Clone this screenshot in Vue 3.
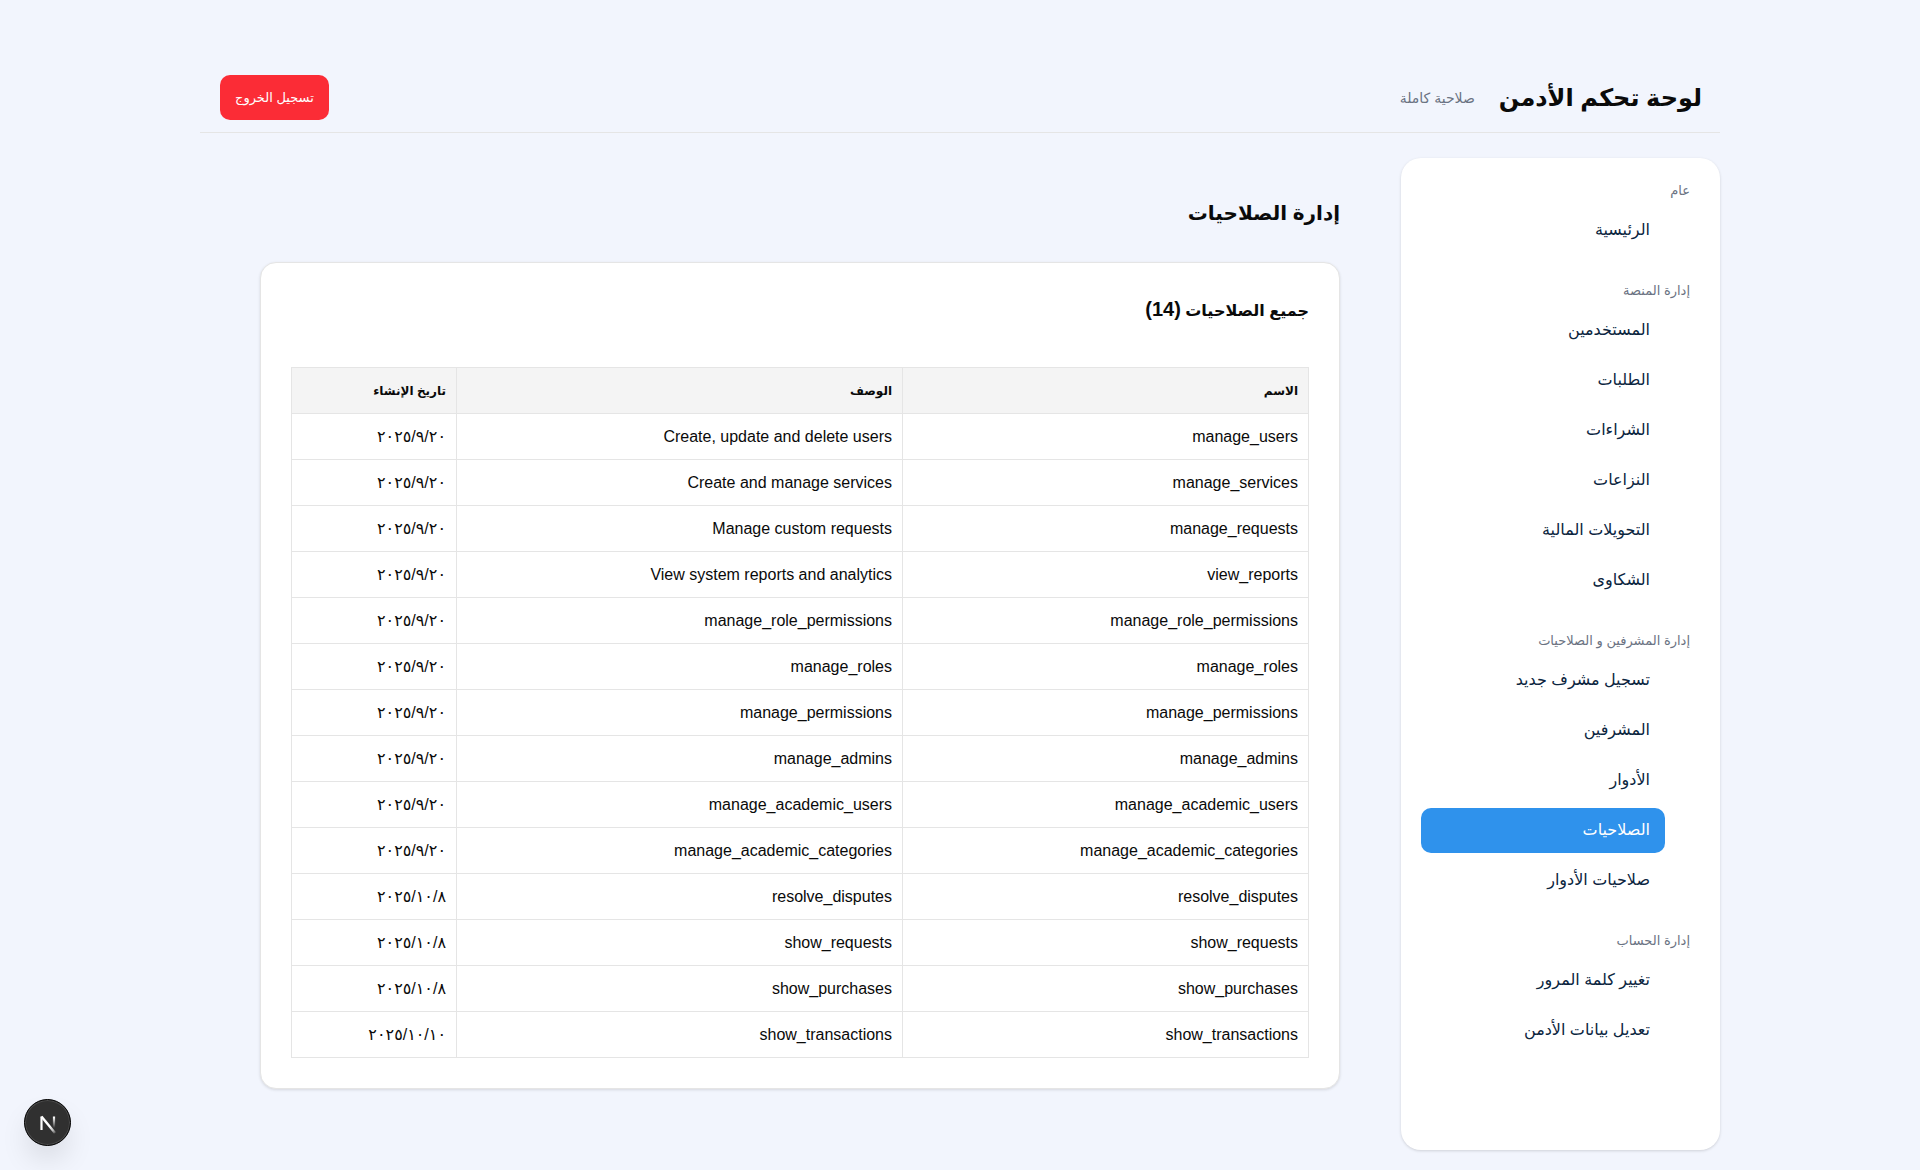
<script setup>
const sections = [
  { title: 'عام', items: ['الرئيسية'] },
  {
    title: 'إدارة المنصة',
    items: ['المستخدمين', 'الطلبات', 'الشراءات', 'النزاعات', 'التحويلات المالية', 'الشكاوى'],
  },
  {
    title: 'إدارة المشرفين و الصلاحيات',
    items: ['تسجيل مشرف جديد', 'المشرفين', 'الأدوار', 'الصلاحيات', 'صلاحيات الأدوار'],
  },
  { title: 'إدارة الحساب', items: ['تغيير كلمة المرور', 'تعديل بيانات الأدمن'] },
]
const active = 'الصلاحيات'

const permissions = [
  ['manage_users', 'Create, update and delete users', '٢٠٢٥/٩/٢٠'],
  ['manage_services', 'Create and manage services', '٢٠٢٥/٩/٢٠'],
  ['manage_requests', 'Manage custom requests', '٢٠٢٥/٩/٢٠'],
  ['view_reports', 'View system reports and analytics', '٢٠٢٥/٩/٢٠'],
  ['manage_role_permissions', 'manage_role_permissions', '٢٠٢٥/٩/٢٠'],
  ['manage_roles', 'manage_roles', '٢٠٢٥/٩/٢٠'],
  ['manage_permissions', 'manage_permissions', '٢٠٢٥/٩/٢٠'],
  ['manage_admins', 'manage_admins', '٢٠٢٥/٩/٢٠'],
  ['manage_academic_users', 'manage_academic_users', '٢٠٢٥/٩/٢٠'],
  ['manage_academic_categories', 'manage_academic_categories', '٢٠٢٥/٩/٢٠'],
  ['resolve_disputes', 'resolve_disputes', '٢٠٢٥/١٠/٨'],
  ['show_requests', 'show_requests', '٢٠٢٥/١٠/٨'],
  ['show_purchases', 'show_purchases', '٢٠٢٥/١٠/٨'],
  ['show_transactions', 'show_transactions', '٢٠٢٥/١٠/١٠'],
]
</script>

<template>
  <div class="page" dir="rtl" lang="ar">
    <header class="topbar">
      <div class="brand">
        <h1>لوحة تحكم الأدمن</h1>
        <span class="role">صلاحية كاملة</span>
      </div>
      <button type="button" class="logout">تسجيل الخروج</button>
    </header>

    <div class="layout">
      <nav class="sidebar">
        <section v-for="s in sections" :key="s.title" class="group">
          <h2 class="group-title">{{ s.title }}</h2>
          <ul>
            <li v-for="item in s.items" :key="item">
              <a href="#" :class="{ active: item === active }">{{ item }}</a>
            </li>
          </ul>
        </section>
      </nav>

      <main class="content">
        <h2 class="page-title">إدارة الصلاحيات</h2>
        <div class="card">
          <h3>جميع الصلاحيات <span class="count">(14)</span></h3>
          <table>
            <colgroup>
              <col class="col-name" />
              <col class="col-desc" />
              <col class="col-date" />
            </colgroup>
            <thead>
              <tr>
                <th>الاسم</th>
                <th>الوصف</th>
                <th>تاريخ الإنشاء</th>
              </tr>
            </thead>
            <tbody>
              <tr v-for="p in permissions" :key="p[0]">
                <td>{{ p[0] }}</td>
                <td>{{ p[1] }}</td>
                <td>{{ p[2] }}</td>
              </tr>
            </tbody>
          </table>
        </div>
      </main>
    </div>

    <button type="button" class="dev-badge" aria-label="Next.js">
      <svg width="40" height="40" viewBox="0 0 40 40" fill="none">
        <defs>
          <linearGradient id="diag" x1="22" y1="23" x2="28" y2="31" gradientUnits="userSpaceOnUse">
            <stop stop-color="#fff" />
            <stop offset="0.5" stop-color="#fff" stop-opacity="0.7" />
            <stop offset="1" stop-color="#fff" stop-opacity="0" />
          </linearGradient>
          <linearGradient id="stem" x1="26" y1="14" x2="26" y2="25" gradientUnits="userSpaceOnUse">
            <stop stop-color="#fff" />
            <stop offset="1" stop-color="#fff" stop-opacity="0" />
          </linearGradient>
        </defs>
        <path d="M13.500 27V13.500" stroke="#fff" stroke-width="2.200" />
        <path d="M13.500 13.500L27 30" stroke="url(#diag)" stroke-width="2.400" />
        <path d="M26 13.500V25" stroke="url(#stem)" stroke-width="2.200" />
      </svg>
    </button>
  </div>
</template>

<style>
body {
  margin: 0;
  background: #f2f5fd;
}
</style>

<style scoped>
.page {
  box-sizing: border-box;
  min-height: 100vh;
  padding: 60px 200px 20px;
  background: #f2f5fd;
  color: #0a0a0a;
  font: 16px/24px "Liberation Sans", "DejaVu Sans", sans-serif;
}
h1, h2, h3, ul { margin: 0; padding: 0; }
.topbar {
  display: flex;
  align-items: center;
  justify-content: space-between;
  padding: 15px 18px 12px 20px;
  border-bottom: 1px solid #e5e5e5;
}
.brand { display: flex; align-items: center; gap: 24px; }
h1 { font-size: 24px; line-height: 36px; }
.role { font-size: 14px; color: #6a7282; }
.logout {
  height: 45px;
  padding: 0 15px;
  border: 0;
  border-radius: 10px;
  background: #fb2c36;
  color: #fff;
  font: inherit;
  font-size: 13px;
}
.layout { display: flex; align-items: stretch; padding-top: 25px; }
.sidebar {
  box-sizing: border-box;
  flex: 0 0 319px;
  min-height: 992px;
  padding: 21px 0;
  border-radius: 20px;
  background: #fff;
  box-shadow: 0 1px 3px rgba(0, 0, 0, 0.15);
}
.group { margin-bottom: 26px; }
.group-title {
  padding: 0 30px;
  margin-bottom: 5px;
  font-size: 13px;
  font-weight: 400;
  color: #6a7282;
}
ul { display: flex; flex-direction: column; gap: 5px; list-style: none; }
li { padding: 0 55px 0 20px; }
li a {
  display: block;
  padding: 0 15px 2px;
  border-radius: 10px;
  color: #0b2540;
  line-height: 43px;
  text-decoration: none;
}
li a.active { background: #2f92ec; color: #fff; }
.content { flex: 1; padding: 35px 61px 0 60px; }
.page-title { font-size: 20px; line-height: 40px; }
.card {
  margin-top: 29px;
  padding: 30px;
  border: 1px solid #e5e5e5;
  border-radius: 16px;
  background: #fff;
  box-shadow: 0 1px 3px rgba(0, 0, 0, 0.12);
}
h3 { margin-bottom: 40px; font-size: 16px; line-height: 33px; }
.count { font-size: 20px; }
table { width: 100%; border-collapse: collapse; table-layout: fixed; }
.col-desc { width: 446px; }
.col-date { width: 165px; }
th, td {
  box-sizing: border-box;
  height: 46px;
  padding: 0 10px;
  border: 1px solid #e5e5e5;
  text-align: right;
}
th { background: #f4f4f4; font-size: 12px; }
.dev-badge {
  position: fixed;
  left: 24px;
  bottom: 24px;
  width: 47px;
  height: 47px;
  padding: 0;
  display: flex;
  align-items: center;
  justify-content: center;
  border: 1px solid #000;
  border-radius: 50%;
  background: #303030;
  box-shadow: inset 0 0 0 1px #4a4a4a, 0 16px 32px -8px rgba(0, 0, 0, 0.2);
}
</style>
